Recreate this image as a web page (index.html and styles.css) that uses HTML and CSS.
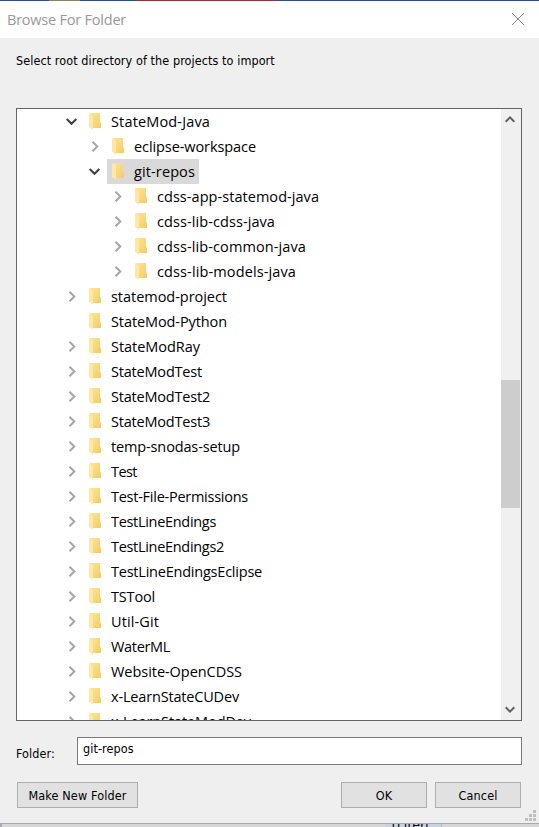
FILE: index.html
```
<!DOCTYPE html>
<html lang="en">
<head>
<meta charset="utf-8">
<title>Browse For Folder</title>
<link rel="stylesheet" href="styles.css">
</head>
<body>
<svg class="defs" aria-hidden="true">
  <defs>
    <linearGradient id="gold" x1="0" y1="0" x2="1" y2="1"><stop offset="0" stop-color="#ffe596"/><stop offset="1" stop-color="#f3cb66"/></linearGradient>
    <symbol id="folder" viewBox="0 0 12 17"><path d="M1 0H11V9L12 10V15H1Z" fill="url(#gold)"/><path d="M0 0L4 3V17L0 14Z" fill="#ffe8a6"/></symbol>
    <symbol id="right" viewBox="0 0 12 12"><path d="M3.5 .7L8.3 5.5L3.5 10.3" fill="none" stroke="#a6a6a6" stroke-width="2"/></symbol>
    <symbol id="down" viewBox="0 0 12 12"><path d="M.7 3L5.5 7.8L10.3 3" fill="none" stroke="#404040" stroke-width="2"/></symbol>
  </defs>
</svg>
<main class="window">
  <div class="edge"></div>
  <header class="titlebar">
    <h1>Browse For Folder</h1>
    <svg class="close" viewBox="0 0 12 12"><path d="M0 0L12 12M12 0L0 12" stroke="#888" fill="none"/></svg>
  </header>
  <section class="body">
    <p class="prompt">Select root directory of the projects to import</p>
    <div class="tree">
      <ul class="rows" id="rows"></ul>
      <div class="scrollbar">
        <svg class="arrow" viewBox="0 0 10 7"><path d="M.7 5.7L5 1.4L9.3 5.7" fill="none" stroke="#606060" stroke-width="2"/></svg>
        <div class="thumb"></div>
        <svg class="arrow" viewBox="0 0 10 7"><path d="M.7 1.3L5 5.6L9.3 1.3" fill="none" stroke="#606060" stroke-width="2"/></svg>
      </div>
    </div>
    <div class="field"><span class="caption">Folder:</span><div class="input"><span>git-repos</span></div></div>
    <div class="buttons">
      <button class="make"><span>Make New Folder</span></button>
      <button class="ok"><span>OK</span></button>
      <button class="cancel"><span>Cancel</span></button>
    </div>
    <svg class="grip" viewBox="0 0 11 11" fill="#bfbfbf"><path d="M8 0h3v3h-3zM4 4h3v3h-3zM8 4h3v3h-3zM0 8h3v3h-3zM4 8h3v3h-3zM8 8h3v3h-3z"/></svg>
  </section>
  <footer class="behind"><span class="item">0 iten</span></footer>
</main>
<script src="tree.js"></script>
</body>
</html>
```
FILE: tree.js
```
// name, depth, state, label width
const folders = [
  ["StateMod-Java", 0, "down", 99],
  ["eclipse-workspace", 1, "right", 122],
  ["git-repos", 1, "down", 61],
  ["cdss-app-statemod-java", 2, "right", 162],
  ["cdss-lib-cdss-java", 2, "right", 118],
  ["cdss-lib-common-java", 2, "right", 149],
  ["cdss-lib-models-java", 2, "right", 139],
  ["statemod-project", 0, "right", 116],
  ["StateMod-Python", 0, "", 116],
  ["StateModRay", 0, "right", 89],
  ["StateModTest", 0, "right", 91],
  ["StateModTest2", 0, "right", 99],
  ["StateModTest3", 0, "right", 99],
  ["temp-snodas-setup", 0, "right", 129],
  ["Test", 0, "right", 26],
  ["Test-File-Permissions", 0, "right", 137],
  ["TestLineEndings", 0, "right", 105],
  ["TestLineEndings2", 0, "right", 113],
  ["TestLineEndingsEclipse", 0, "right", 151],
  ["TSTool", 0, "right", 44],
  ["Util-Git", 0, "right", 48],
  ["WaterML", 0, "right", 59],
  ["Website-OpenCDSS", 0, "right", 131],
  ["x-LearnStateCUDev", 0, "right", 128],
  ["x-LearnStateModDev", 0, "right", 140]
];
const rows = document.getElementById("rows");
for (const [name, depth, state, width] of folders) {
  const li = document.createElement("li");
  li.className = "row depth" + depth + (name === "git-repos" ? " selected" : "");
  li.innerHTML = `<svg class="chevron" viewBox="0 0 12 12">${state ? `<use href="#${state}"/>` : ""}</svg>` +
    `<span class="entry"><svg class="folder" viewBox="0 0 12 17"><use href="#folder"/></svg><span class="label">${name}</span></span>`;
  rows.append(li);
  const label = li.querySelector(".label");
  const spare = width - label.getBoundingClientRect().width;
  label.style.letterSpacing = spare / name.length + "px";
}
```
FILE: styles.css
```
* { box-sizing: border-box; }
html, body { margin: 0; overflow: hidden; }
body { width: 539px; height: 827px; background: #efefef; color: #000; font-family: "DejaVu Sans Condensed", "DejaVu Sans", sans-serif; font-stretch: condensed; font-size: 12.5px; letter-spacing: .08px; }
.defs { position: absolute; width: 0; height: 0; }
.window { height: 827px; display: flex; flex-direction: column; }
.edge { height: 1px; background: linear-gradient(90deg, #2f4c86 49px, #8c8060 49px 80px, #2f4c86 80px 136px, #913338 136px 276px, #2f4c86 276px); }
.titlebar { height: 37px; background: #fff; display: flex; justify-content: space-between; padding: 0 15px 0 7px; }
h1 { margin: 0; font: 400 14.5px/38px "Open Sans", sans-serif; color: #999; letter-spacing: -.22px; }
.close { width: 12px; height: 12px; margin-top: 12px; overflow: visible; }
.body { height: 785px; padding: 0 17px 0 16px; position: relative; }
.prompt { margin: 0; padding-top: 13px; height: 70px; line-height: 19px; white-space: nowrap; }
.tree { height: 613px; border: 1px solid #646464; background: #fff; display: flex; overflow: hidden; }
.rows { flex: 1; list-style: none; margin: 0; padding: 0; }
.row { height: 25px; display: flex; align-items: center; padding-left: 49px; font: 14.5px/26px "Open Sans", sans-serif; letter-spacing: 0; white-space: nowrap; }
.depth1 { padding-left: 72px; }
.depth2 { padding-left: 95px; }
.chevron { width: 12px; height: 12px; margin-right: 6px; }
.entry { height: 25px; display: flex; padding: 0 4px 0 5px; }
.folder { width: 12px; height: 17px; margin: 4px 10px 0 0; }
.selected .entry { background: #d9d9d9; }
.scrollbar { width: 20px; background: #f0f0f0; display: flex; flex-direction: column; align-items: flex-start; justify-content: space-between; padding: 7px 0; }
.arrow { width: 10px; height: 7px; margin-left: 4px; }
.thumb { width: 19px; height: 128px; background: #cdcdcd; margin-top: -65px; transform: translateY(62px); }
.field { display: flex; height: 28px; margin-top: 16px; }
.caption { width: 61px; line-height: 34px; }
.input { flex: 1; height: 28px; background: #fff; border: 1px solid #7a7a7a; padding-left: 5px; line-height: 22px; }
.buttons { display: flex; margin: 17px 0 0 1px; }
button { height: 26px; padding: 0; font: inherit; letter-spacing: .15px; color: #000; background: #e1e1e1; border: 1px solid #adadad; border-radius: 0; }
.make { width: 121px; }
.ok { width: 86px; margin-left: auto; }
.cancel { width: 86px; margin: 0 1px 0 8px; }
.grip { position: absolute; right: 3px; bottom: 2px; width: 11px; height: 11px; }
.behind { height: 4px; border-top: 1px solid #aaa; background: linear-gradient(90deg, #aab 0 2px, #d6d6d6 2px); padding-left: 385px; overflow: hidden; }
.item { display: block; width: 57px; height: 4px; background: #c9d2e2; border-right: 1px solid #bbb; padding-left: 7px; font: 14px/1px "Open Sans", sans-serif; letter-spacing: 0; overflow: hidden; }
```
